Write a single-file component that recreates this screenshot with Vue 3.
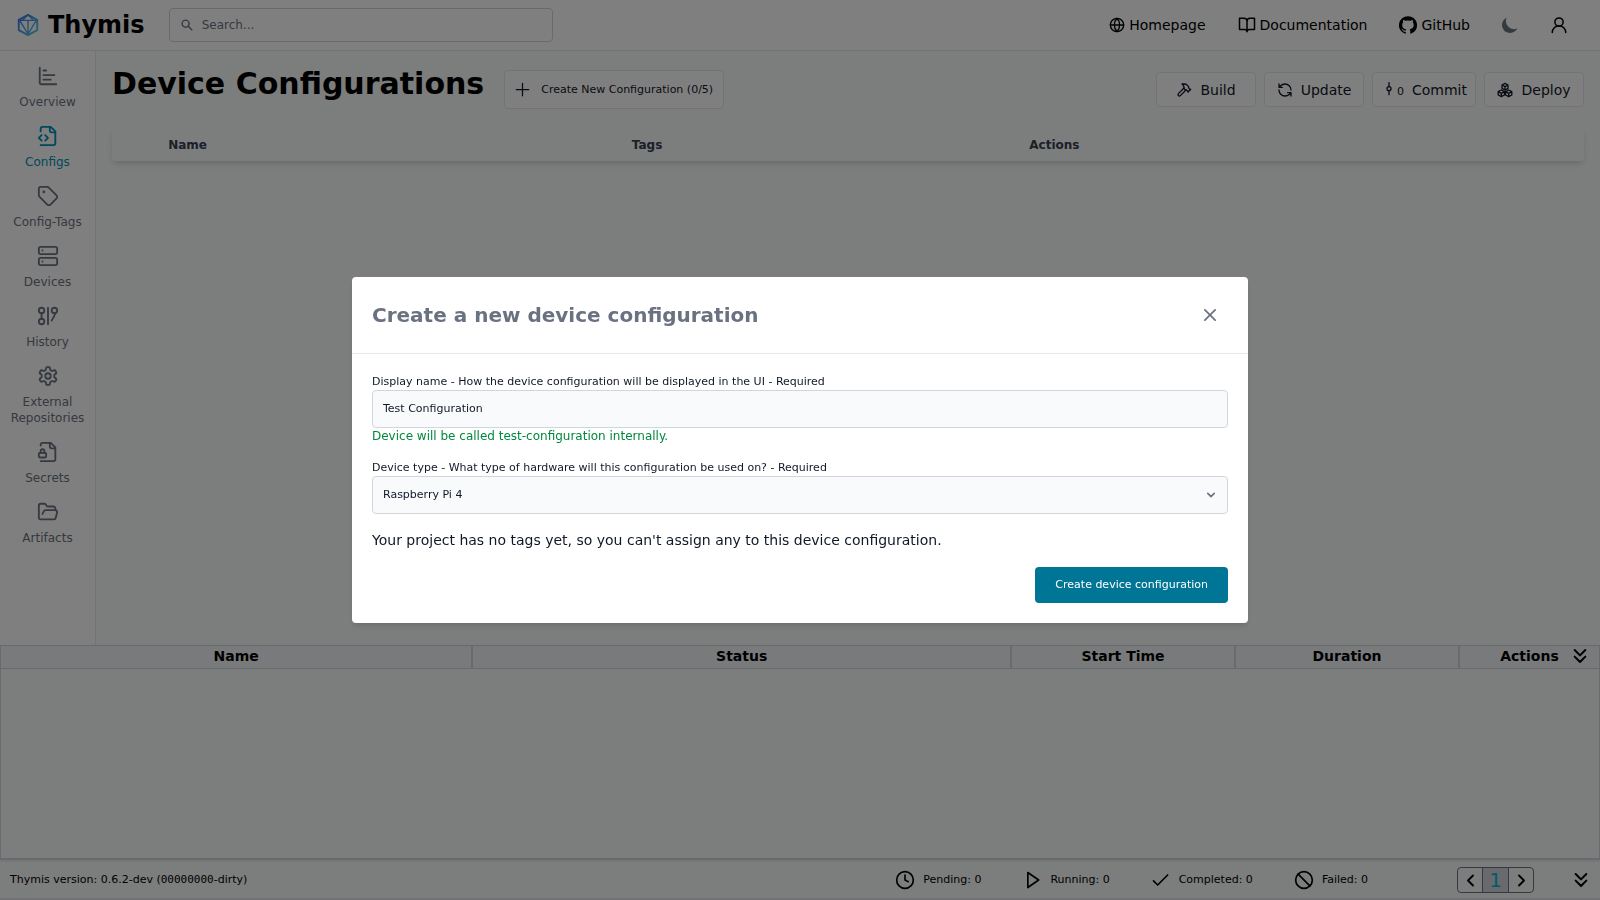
<script setup>
import { ref } from 'vue'

const navLinks = [
  { label: 'Homepage', icon: 'globe' },
  { label: 'Documentation', icon: 'book' },
  { label: 'GitHub', icon: 'github' },
]

const sideItems = [
  { label: 'Overview', icon: 'chart' },
  { label: 'Configs', icon: 'fileCode', active: true },
  { label: 'Config-Tags', icon: 'tag' },
  { label: 'Devices', icon: 'server' },
  { label: 'History', icon: 'history' },
  { label: 'External Repositories', icon: 'settings' },
  { label: 'Secrets', icon: 'fileLock' },
  { label: 'Artifacts', icon: 'folder' },
]

const icons = {
  globe: '<circle cx="12" cy="12" r="10"/><path d="M12 2a14.5 14.5 0 0 0 0 20 14.5 14.5 0 0 0 0-20M2 12h20"/>',
  book: '<path d="M2 3h6a4 4 0 0 1 4 4v14a3 3 0 0 0-3-3H2zM22 3h-6a4 4 0 0 0-4 4v14a3 3 0 0 1 3-3h7z"/>',
  github: '<path fill="currentColor" stroke="none" d="M12 .3a12 12 0 0 0-3.8 23.4c.6.1.8-.3.8-.6v-2c-3.3.7-4-1.6-4-1.6-.6-1.4-1.4-1.8-1.4-1.8-1-.7.1-.7.1-.7 1.2 0 1.9 1.2 1.9 1.2 1 1.8 2.8 1.3 3.5 1 0-.8.4-1.3.7-1.6-2.7-.3-5.5-1.3-5.5-6 0-1.2.5-2.3 1.3-3.1-.2-.4-.6-1.6 0-3.2 0 0 1-.3 3.4 1.2a11.5 11.5 0 0 1 6 0c2.3-1.5 3.3-1.2 3.3-1.2.6 1.6.2 2.8 0 3.2.9.8 1.3 1.9 1.3 3.2 0 4.6-2.8 5.6-5.5 5.9.5.4.9 1 .9 2.2v3.3c0 .3.1.7.8.6A12 12 0 0 0 12 .3"/>',
  chart: '<path d="M3 3v16a2 2 0 0 0 2 2h16M7 6h3M7 11h12M7 16h8"/>',
  fileCode: '<path d="M4 7V4a2 2 0 0 1 2-2h9l5 5v13a2 2 0 0 1-2 2H4"/><path d="M14 2v4a2 2 0 0 0 2 2h4M5 11l-3 3 3 3M9 17l3-3-3-3"/>',
  tag: '<path d="M12.6 2.6A2 2 0 0 0 11.2 2H4a2 2 0 0 0-2 2v7.2a2 2 0 0 0 .6 1.4l8.7 8.7a2.4 2.4 0 0 0 3.4 0l6.6-6.6a2.4 2.4 0 0 0 0-3.4z"/><circle cx="7.5" cy="7.5" r=".6" fill="currentColor"/>',
  server: '<rect x="2" y="2" width="20" height="8" rx="2"/><rect x="2" y="14" width="20" height="8" rx="2"/><path d="M6 6h.01M6 18h.01"/>',
  history: '<circle cx="5" cy="6" r="3"/><circle cx="5" cy="18" r="3"/><path d="M5 9v6M12 3v18"/><circle cx="19" cy="6" r="3"/><path d="M20 9c-1 3-2 5-4 8"/>',
  settings: '<path d="M12.2 2h-.4a2 2 0 0 0-2 2v.2a2 2 0 0 1-1 1.7l-.4.3a2 2 0 0 1-2 0l-.2-.1a2 2 0 0 0-2.7.7l-.2.4a2 2 0 0 0 .7 2.7l.2.1a2 2 0 0 1 1 1.7v.5a2 2 0 0 1-1 1.8l-.2.1a2 2 0 0 0-.7 2.7l.2.4a2 2 0 0 0 2.7.7l.2-.1a2 2 0 0 1 2 0l.4.3a2 2 0 0 1 1 1.7v.2a2 2 0 0 0 2 2h.4a2 2 0 0 0 2-2v-.2a2 2 0 0 1 1-1.7l.4-.3a2 2 0 0 1 2 0l.2.1a2 2 0 0 0 2.7-.7l.2-.4a2 2 0 0 0-.7-2.7l-.2-.1a2 2 0 0 1-1-1.8v-.5a2 2 0 0 1 1-1.7l.2-.1a2 2 0 0 0 .7-2.7l-.2-.4a2 2 0 0 0-2.7-.7l-.2.1a2 2 0 0 1-2 0l-.4-.3a2 2 0 0 1-1-1.7V4a2 2 0 0 0-2-2z"/><circle cx="12" cy="12" r="3"/>',
  fileLock: '<path d="M4 5V4a2 2 0 0 1 2-2h9l5 5v13a2 2 0 0 1-2 2H4"/><path d="M14 2v4a2 2 0 0 0 2 2h4"/><rect x="2" y="13" width="8" height="5" rx="1"/><path d="M8 13v-2a2 2 0 1 0-4 0v2"/>',
  folder: '<path d="m6 14 1.5-2.9A2 2 0 0 1 9.2 10H20a2 2 0 0 1 1.9 2.5l-1.5 6a2 2 0 0 1-2 1.5H4a2 2 0 0 1-2-2V5a2 2 0 0 1 2-2h3.9a2 2 0 0 1 1.7.9l.8 1.2a2 2 0 0 0 1.7.9H18a2 2 0 0 1 2 2v2"/>',
  hammer: '<path d="m15 12-8.4 8.4a1 1 0 1 1-3-3L12 9M18 15l4-4"/><path d="m21.5 11.5-1.9-1.9a2 2 0 0 1-.6-1.4V7l-2.3-2.3A6 6 0 0 0 12.5 3L9 3l.9.8A6.2 6.2 0 0 1 12 8.4V10l2 2h1.2a2 2 0 0 1 1.4.6l1.9 1.9"/>',
  refresh: '<path d="M21 12a9 9 0 0 0-9-9 9.8 9.8 0 0 0-6.7 2.7L3 8M3 3v5h5M3 12a9 9 0 0 0 9 9 9.8 9.8 0 0 0 6.7-2.7L21 16M16 16h5v5"/>',
  commit: '<path d="M12 1v6M12 13v6"/><circle cx="12" cy="10" r="3"/>',
  boxes: '<path d="m12 2 4.5 2.5v5L12 12 7.5 9.500v-5zM7.5 4.5 12 7l4.5-2.5M12 7v5M6.500 12l4.700 2.500v5L6.500 22l-4.700-2.500v-5zM1.800 14.500l4.700 2.500 4.700-2.500M6.500 17v5M17.500 12l4.700 2.500v5L17.500 22l-4.700-2.500v-5zM12.800 14.500l4.700 2.500 4.700-2.500M17.500 17v5"/>',
  clock: '<circle cx="12" cy="12" r="10"/><path d="M12 6v6l4 2"/>',
  play: '<path d="M7 3l13 9-13 9z"/>',
  check: '<path d="m3 13 5 5L20 6"/>',
  ban: '<circle cx="12" cy="12" r="10"/><path d="m5 5 14 14"/>',
}

const actions = [
  { label: 'Build', icon: 'hammer' },
  { label: 'Update', icon: 'refresh' },
  { label: 'Commit', icon: 'commit', count: '0' },
  { label: 'Deploy', icon: 'boxes' },
]

const statuses = [
  { label: 'Pending: 0', icon: 'clock' },
  { label: 'Running: 0', icon: 'play' },
  { label: 'Completed: 0', icon: 'check' },
  { label: 'Failed: 0', icon: 'ban' },
]

const displayName = ref('Test Configuration')
const deviceType = ref('Raspberry Pi 4')
const search = ref('')
</script>

<template>
  <div class="page">
    <header class="topbar">
      <a class="brand" href="#">
        <svg class="logo" viewBox="0 0 24 26" fill="none" stroke="url(#brand)" stroke-linejoin="round">
          <defs>
            <linearGradient id="brand" x1="0" y1="0" x2="1" y2="1">
              <stop offset="0" stop-color="#3b6fe8" />
              <stop offset="1" stop-color="#5ad0dc" />
            </linearGradient>
          </defs>
          <path stroke-width="2" d="M12 2 22 7.5v11L12 24 2 18.500v-11z" />
          <path stroke-width="1.5" d="M2 8h20M12 2 6 8M12 2l6 6M12 8v15M3 8l9 15 9-15" />
        </svg>
        <span>Thymis</span>
      </a>
      <label class="search">
        <svg class="search-icon" viewBox="0 0 20 20" fill="currentColor"><path fill-rule="evenodd" d="M8 4a4 4 0 1 0 0 8 4 4 0 0 0 0-8M2 8a6 6 0 1 1 10.9 3.5l4.8 4.8a1 1 0 0 1-1.4 1.4l-4.8-4.8A6 6 0 0 1 2 8" /></svg>
        <input v-model="search" type="text" placeholder="Search..." aria-label="Search" />
      </label>
      <nav class="links">
        <a v-for="link in navLinks" :key="link.label" href="#">
          <svg class="icon" :class="link.icon" viewBox="0 0 24 24" v-html="icons[link.icon]"></svg>
          <span>{{ link.label }}</span>
        </a>
        <button class="plain moon" type="button" aria-label="Toggle dark mode">
          <svg viewBox="2 2 16 16" fill="currentColor"><path d="M17.3 13.3A8 8 0 0 1 6.7 2.7a8 8 0 1 0 10.6 10.6" /></svg>
        </button>
        <button class="plain" type="button" aria-label="Account">
          <svg class="icon user" viewBox="0 0 24 24"><circle cx="12" cy="8" r="5.5" /><path d="M3 22a9 9 0 0 1 18 0" /></svg>
        </button>
      </nav>
    </header>

    <div class="middle">
      <aside class="sidebar">
        <a v-for="item in sideItems" :key="item.label" href="#" :class="{ active: item.active }">
          <svg class="icon side-icon" viewBox="0 0 24 24" v-html="icons[item.icon]"></svg>
          <span>{{ item.label }}</span>
        </a>
      </aside>
      <main class="content">
        <div class="heading">
          <h1>Device Configurations</h1>
          <button class="outlined create" type="button">
            <svg class="icon plus" viewBox="0 0 24 24"><path d="M12 2v20M2 12h20" /></svg>
            Create New Configuration (0/5)
          </button>
          <div class="actions">
            <button v-for="a in actions" :key="a.label" class="outlined action" type="button">
              <span class="action-mark">
                <svg class="icon action-icon" viewBox="0 0 24 24" v-html="icons[a.icon]"></svg>
                <small v-if="a.count">{{ a.count }}</small>
              </span>
              {{ a.label }}
            </button>
          </div>
        </div>
        <table class="configs">
          <colgroup><col class="c-handle" /><col /><col class="c-tags" /><col class="c-actions" /></colgroup>
          <thead>
            <tr><th></th><th>Name</th><th>Tags</th><th>Actions</th></tr>
          </thead>
        </table>
      </main>
    </div>

    <section class="tasks">
      <table>
        <colgroup><col class="t-name" /><col /><col class="t-time" /><col class="t-time" /><col class="t-actions" /></colgroup>
        <thead>
          <tr>
            <th>Name</th><th>Status</th><th>Start Time</th><th>Duration</th>
            <th>
              <div class="last-head">Actions
                <button class="plain collapse" type="button" aria-label="Collapse tasks">
                  <svg class="icon double" viewBox="0 0 24 24"><path d="m4 3 8 8 8-8M4 13l8 8 8-8" /></svg>
                </button>
              </div>
            </th>
          </tr>
        </thead>
      </table>
    </section>

    <footer class="statusbar">
      <span class="version">Thymis version: 0.6.2-dev (<code>00000000</code>-dirty)</span>
      <div class="statuses">
        <span v-for="s in statuses" :key="s.label" class="status">
          <svg class="icon status-icon" viewBox="0 0 24 24" v-html="icons[s.icon]"></svg>{{ s.label }}
        </span>
      </div>
      <nav class="pager" aria-label="Pages">
        <button type="button" aria-label="Previous"><svg class="icon arrow" viewBox="0 0 24 24"><path d="m16 4-8 8 8 8" /></svg></button>
        <button type="button" class="current">1</button>
        <button type="button" aria-label="Next"><svg class="icon arrow" viewBox="0 0 24 24"><path d="m8 4 8 8-8 8" /></svg></button>
      </nav>
      <button class="plain" type="button" aria-label="Collapse">
        <svg class="icon double" viewBox="0 0 24 24"><path d="m4 3 8 8 8-8M4 13l8 8 8-8" /></svg>
      </button>
    </footer>

    <div class="backdrop">
      <form class="modal" role="dialog" aria-labelledby="modal-title" @submit.prevent>
        <div class="modal-head">
          <h3 id="modal-title">Create a new device configuration</h3>
          <button class="plain close" type="button" aria-label="Close">
            <svg class="icon" viewBox="0 0 14 14"><path d="m1 1 12 12M13 1 1 13" /></svg>
          </button>
        </div>
        <div class="modal-body">
          <div class="field">
            <label for="display-name">Display name - How the device configuration will be displayed in the UI - Required</label>
            <input id="display-name" v-model="displayName" type="text" />
            <p class="hint">Device will be called test-configuration internally.</p>
          </div>
          <div class="field">
            <label for="device-type">Device type - What type of hardware will this configuration be used on? - Required</label>
            <div class="select">
              <select id="device-type" v-model="deviceType"><option>Raspberry Pi 4</option></select>
              <svg class="icon" viewBox="0 0 10 10"><path d="m1 3 4 4 4-4" /></svg>
            </div>
          </div>
          <p class="note">Your project has no tags yet, so you can't assign any to this device configuration.</p>
          <button class="submit" type="submit">Create device configuration</button>
        </div>
      </form>
    </div>
  </div>
</template>

<style>
body { margin: 0; }
</style>

<style scoped>
.page, .page * { box-sizing: border-box; }
.page {
  display: flex;
  flex-direction: column;
  min-height: 100vh;
  background: #f9fafa;
  color: #000;
  font: 14px/20px "DejaVu Sans", sans-serif;
}
button, input, select { font: inherit; color: inherit; margin: 0; }
button { cursor: pointer; }
a { color: inherit; text-decoration: none; }
h1, h3, p { margin: 0; }
svg { display: block; flex: none; }
.icon { fill: none; stroke: currentColor; stroke-width: 2; stroke-linecap: round; stroke-linejoin: round; }
.plain { display: flex; padding: 0; border: 0; background: none; }

.topbar {
  display: flex;
  align-items: center;
  padding: 8px 32px 8px 16px;
  background: #fff;
  border-bottom: 1px solid #e5e7eb;
}
.brand { display: flex; align-items: center; gap: 8px; margin-right: 24px; font-size: 24px; line-height: 32px; font-weight: 700; }
.logo { width: 24px; height: 24px; }
.search {
  display: flex;
  align-items: center;
  gap: 8px;
  flex: 0 1 384px;
  height: 34px;
  padding: 0 10px;
  border: 1px solid #d1d5db;
  border-radius: 4px;
  color: #6b7280;
  font-size: 12px;
}
.search-icon { width: 14px; height: 14px; }
.search input { flex: 1; min-width: 0; padding: 0; border: 0; outline: 0; background: none; }
.search input::placeholder { color: #6b7280; opacity: 1; }
.links { display: flex; align-items: center; gap: 32px; margin-left: auto; }
.links a { display: flex; align-items: center; gap: 4px; }
.globe, .moon svg { width: 16px; height: 16px; }
.book, .github, .user { width: 18px; height: 18px; }
.moon { color: #6b7280; }

.middle { display: flex; flex: 1; }
.sidebar {
  display: flex;
  flex-direction: column;
  gap: 15px;
  width: 96px;
  padding: 14px 0;
  background: #fff;
  border-right: 1px solid #e5e7eb;
  color: #6b7280;
  font-size: 12px;
  line-height: 16px;
  text-align: center;
}
.sidebar a { display: flex; flex-direction: column; align-items: center; gap: 7px; }
.sidebar .active { color: #0092b8; }
.side-icon { width: 22px; height: 22px; }

.content { flex: 1; padding: 14px 16px; }
.heading { display: flex; align-items: center; min-height: 49px; }
h1 { padding-bottom: 12px; font-size: 30px; line-height: 36px; font-weight: 700; }
.outlined {
  display: flex;
  align-items: center;
  justify-content: center;
  background: #fff;
  border: 1px solid #e5e7eb;
  border-radius: 4px;
  color: #101828;
}
.create { gap: 11px; height: 39px; margin-left: 20px; padding: 0 10px; font-size: 11px; }
.plus { width: 15px; height: 15px; }
.actions { display: flex; gap: 8px; margin-left: auto; }
.action { gap: 8px; min-width: 100px; height: 35px; padding: 0 8px; }
.action-mark { display: flex; align-items: center; }
.action-icon { width: 16px; height: 16px; }
.action-mark small { font-size: 11px; line-height: 16px; padding-top: 4px; }
.configs {
  width: 100%;
  margin-top: 14px;
  table-layout: fixed;
  border-collapse: collapse;
  border-radius: 4px;
  background: #f9fafa;
  box-shadow: 0 4px 6px -1px rgb(0 0 0 / 10%), 0 2px 4px -2px rgb(0 0 0 / 10%);
  color: #364153;
  font-size: 12px;
  line-height: 16px;
  text-align: left;
}
.configs th { padding: 9px 12px 8px; }
.c-handle { width: 3%; }
.c-tags { width: 27%; }
.c-actions { width: 38.5%; }

.tasks { min-height: 215px; border: 1px solid #d1d5dc; border-bottom-width: 2px; }
.tasks table { width: 100%; table-layout: fixed; border-collapse: collapse; background: #f3f4f6; }
.tasks th { height: 22px; padding: 0; line-height: 20px; border-bottom: 1px solid #d1d5dc; border-right: 2px solid #d1d5dc; vertical-align: top; }
.tasks th:last-child { border-right: 0; }
.t-name { width: 29.5%; }
.t-time { width: 224px; }
.t-actions { width: 140px; }
.last-head { position: relative; }
.collapse { position: absolute; right: 11px; top: 2px; }
.double { width: 16px; height: 16px; stroke-width: 3; }

.statusbar {
  display: flex;
  align-items: center;
  height: 40px;
  padding: 0 11px 0 10px;
  border-bottom: 2px solid #e5e7eb;
  border-top: 2px solid #eceef0;
  font-size: 11px;
}
.version { margin-right: auto; }
code { font-family: "DejaVu Sans Mono", monospace; font-size: 11px; }
.statuses { display: flex; gap: 41px; margin-right: 89px; }
.status { display: flex; align-items: center; gap: 8px; }
.status-icon { width: 20px; height: 20px; }
.pager { display: flex; margin-right: 39px; }
.pager button {
  display: flex;
  align-items: center;
  justify-content: center;
  width: 26px;
  height: 26px;
  margin-right: -1px;
  padding: 0;
  border: 1px solid #6a7282;
  background: none;
}
.pager button:first-child { border-radius: 4px 0 0 4px; }
.pager button:last-child { margin-right: 0; border-radius: 0 4px 4px 0; }
.pager .current { width: 27px; background: #d1d5dc; color: #00b8db; font-size: 20px; }
.arrow { width: 15px; height: 15px; stroke-width: 3; }

.backdrop {
  position: fixed;
  inset: 0;
  display: flex;
  align-items: center;
  justify-content: center;
  padding: 16px;
  background: rgb(0 0 0 / 50%);
}
.modal {
  width: 100%;
  max-width: 896px;
  background: #fff;
  border-radius: 4px;
  box-shadow: 0 4px 6px -1px rgb(0 0 0 / 10%), 0 2px 4px -2px rgb(0 0 0 / 10%);
  color: #101828;
}
.modal-head {
  display: flex;
  align-items: center;
  justify-content: space-between;
  padding: 20px;
  border-bottom: 1px solid #e5e7eb;
  color: #6a7282;
}
h3 { font-size: 20px; line-height: 36px; font-weight: 700; }
.close { padding: 12px; }
.close svg { width: 12px; height: 12px; }
.modal-body { display: flex; flex-direction: column; gap: 16px; padding: 20px; }
.field { display: flex; flex-direction: column; font-size: 11px; line-height: 16px; }
.field input, .field select {
  width: 100%;
  height: 38px;
  padding: 0 10px;
  border: 1px solid #d1d5dc;
  border-radius: 4px;
  outline: 0;
  background: #f9fafb;
  appearance: none;
}
.field input { padding-bottom: 2px; }
.hint { color: #00883c; font-size: 12px; }
.select { position: relative; }
.select svg { position: absolute; right: 13px; top: 15px; width: 8px; height: 8px; pointer-events: none; color: #6a7282; }
.note { line-height: 21px; }
.submit {
  align-self: flex-end;
  height: 36px;
  padding: 0 20px;
  border: 0;
  border-radius: 4px;
  background: #007595;
  color: #fff;
  font-size: 11px;
}
</style>
